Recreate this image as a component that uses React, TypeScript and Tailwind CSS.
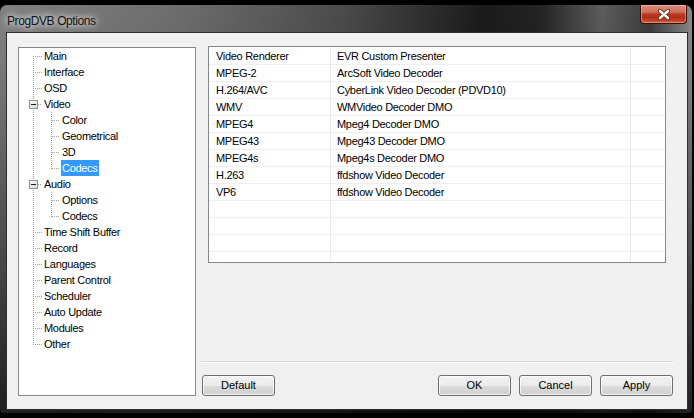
import React from 'react';

type TreeItem = {
  label: string;
  level: 0 | 1;
  first?: boolean;
  last?: boolean;
  expander?: boolean;
  selected?: boolean;
};

const treeItems: TreeItem[] = [
  { label: 'Main', level: 0, first: true },
  { label: 'Interface', level: 0 },
  { label: 'OSD', level: 0 },
  { label: 'Video', level: 0, expander: true },
  { label: 'Color', level: 1 },
  { label: 'Geometrical', level: 1 },
  { label: '3D', level: 1 },
  { label: 'Codecs', level: 1, last: true, selected: true },
  { label: 'Audio', level: 0, expander: true },
  { label: 'Options', level: 1 },
  { label: 'Codecs', level: 1, last: true },
  { label: 'Time Shift Buffer', level: 0 },
  { label: 'Record', level: 0 },
  { label: 'Languages', level: 0 },
  { label: 'Parent Control', level: 0 },
  { label: 'Scheduler', level: 0 },
  { label: 'Auto Update', level: 0 },
  { label: 'Modules', level: 0 },
  { label: 'Other', level: 0, last: true },
];

const codecs = [
  ['Video Renderer', 'EVR Custom Presenter'],
  ['MPEG-2', 'ArcSoft Video Decoder'],
  ['H.264/AVC', 'CyberLink Video Decoder (PDVD10)'],
  ['WMV', 'WMVideo Decoder DMO'],
  ['MPEG4', 'Mpeg4 Decoder DMO'],
  ['MPEG43', 'Mpeg43 Decoder DMO'],
  ['MPEG4s', 'Mpeg4s Decoder DMO'],
  ['H.263', 'ffdshow Video Decoder'],
  ['VP6', 'ffdshow Video Decoder'],
  ['', ''],
  ['', ''],
  ['', ''],
];

const DOT = '#a0a0a0';

// dotted tree connectors for one row
const Connector = ({ item }: { item: TreeItem }) => {
  if (item.level === 0) {
    const y1 = item.first ? 8 : 0;
    const y2 = item.last ? 9 : 16;
    return (
      <svg width="24" height="16" className="shrink-0" shapeRendering="crispEdges">
        <line x1="14.5" y1={y1} x2="14.5" y2={y2} stroke={DOT} strokeDasharray="1 1" />
        <line x1={item.expander ? 19 : 14} y1="8.5" x2="23" y2="8.5" stroke={DOT} strokeDasharray="1 1" />
        {item.expander && (
          <>
            <defs>
              <linearGradient id="exp" x1="0" y1="0" x2="1" y2="1">
                <stop offset="0" stopColor="#ffffff" />
                <stop offset="1" stopColor="#d4d4d4" />
              </linearGradient>
            </defs>
            <rect x="10.5" y="4.5" width="8" height="8" fill="url(#exp)" stroke="#919191" />
            <line x1="12" y1="8.5" x2="17" y2="8.5" stroke="#1a1a1a" />
          </>
        )}
      </svg>
    );
  }
  return (
    <svg width="42" height="16" className="shrink-0" shapeRendering="crispEdges">
      <line x1="14.5" y1="0" x2="14.5" y2="16" stroke={DOT} strokeDasharray="1 1" />
      <line x1="32.5" y1="0" x2="32.5" y2={item.last ? 9 : 16} stroke={DOT} strokeDasharray="1 1" />
      <line x1="33" y1="8.5" x2="41" y2="8.5" stroke={DOT} strokeDasharray="1 1" />
    </svg>
  );
};

const Button = ({ children }: { children: React.ReactNode }) => (
  <button className="w-[73px] h-[21px] rounded-[3px] border border-[#707070] bg-[linear-gradient(180deg,#f2f2f2_0%,#ebebeb_50%,#dddddd_51%,#cfcfcf_100%)] shadow-[inset_0_0_0_1px_rgba(255,255,255,0.7)] text-[11px] text-black leading-none flex items-center justify-center">
    {children}
  </button>
);

export default function App() {
  return (
    <div className="w-[694px] h-[418px] bg-black flex flex-col pt-[5px] pb-[5px] pr-[2px] font-['Liberation_Sans',Arial,sans-serif] overflow-hidden">
      <div className="flex-1 flex flex-col rounded-t-[7px] rounded-b-[4px] pl-[6px] pr-[4px] pb-[3px] bg-[linear-gradient(180deg,rgba(0,0,0,0)_0%,rgba(0,0,0,0.05)_15%,rgba(0,0,0,0.75)_100%),linear-gradient(90deg,#808080_0%,#6e6e6e_25%,#4a4a4a_50%,#1a1a1a_70%,#232323_78%,#5c5c5c_87%,#3c3c3c_94%,#8a8a8a_100%)]">
        {/* title bar */}
        <div className="h-[27px] flex items-start justify-between">
          <div className="mt-[7px] pl-[1px] text-[12px] tracking-[-0.4px] text-[#111] [text-shadow:0_0_6px_#ffffff,0_0_10px_rgba(255,255,255,0.8)]">
            ProgDVB Options
          </div>
          <div className="mr-[1px] w-[47px] h-[19px] rounded-b-[4px] border border-[#3a0d06] border-t-0 bg-[linear-gradient(180deg,#dc8e7c_0%,#cf6f5a_40%,#bc3a20_50%,#b0301a_70%,#d0583a_100%)] shadow-[inset_0_0_0_1px_rgba(255,210,200,0.45)] flex items-center justify-center">
            <svg width="14" height="11" viewBox="0 0 14 11">
              <path d="M3 2 L11 9 M11 2 L3 9" stroke="#5a1a10" strokeWidth="4.2" strokeLinecap="round" />
              <path d="M3 2 L11 9 M11 2 L3 9" stroke="#ffffff" strokeWidth="2.6" strokeLinecap="round" />
            </svg>
          </div>
        </div>

        {/* client area */}
        <div className="flex-1 flex border border-[#2e2e2e] bg-[#f0f0f0] pl-[11px] pr-[13px] pt-[14px] pb-[13px] gap-[5px] text-[11px] text-black">
          {/* tree */}
          <div className="w-[178px] border border-[#828790] bg-white">
            {treeItems.map((item, i) => (
              <div key={i} className="h-[16px] flex items-center">
                <Connector item={item} />
                <span
                  className={
                    item.selected
                      ? 'h-[16px] px-[1px] flex items-center bg-[#3399ff] text-white tracking-[-0.3px]'
                      : 'h-[16px] px-[1px] flex items-center tracking-[-0.3px]'
                  }
                >
                  {item.label}
                </span>
              </div>
            ))}
          </div>

          {/* right side */}
          <div className="flex-1 flex flex-col -mt-[1px]">
            <div className="ml-[7px] mr-[8px] h-[217px] border border-[#828790] bg-white pt-[1px] flex flex-col overflow-hidden">
              {codecs.map(([a, b], i) => (
                <div key={i} className="h-[17px] shrink-0 grid grid-cols-[122px_300px_1fr] border-b border-[#efefef]">
                  <div className="border-r border-[#e9e9e9] pl-[7px] flex items-center tracking-[-0.3px] whitespace-nowrap">{a}</div>
                  <div className="border-r border-[#e9e9e9] pl-[6px] flex items-center tracking-[-0.3px] whitespace-nowrap">{b}</div>
                  <div />
                </div>
              ))}
              <div className="flex-1 grid grid-cols-[122px_300px_1fr]">
                <div className="border-r border-[#e9e9e9]" />
                <div className="border-r border-[#e9e9e9]" />
                <div />
              </div>
            </div>
            <div className="flex-1" />
            <div className="h-[1px] bg-[#d8d8d8] border-b border-white box-content" />
            <div className="mt-[12px] mx-[1px] flex items-center">
              <Button>Default</Button>
              <div className="flex-1" />
              <div className="flex gap-[8px]">
                <Button>OK</Button>
                <Button>Cancel</Button>
                <Button>Apply</Button>
              </div>
            </div>
          </div>
        </div>
      </div>
    </div>
  );
}
